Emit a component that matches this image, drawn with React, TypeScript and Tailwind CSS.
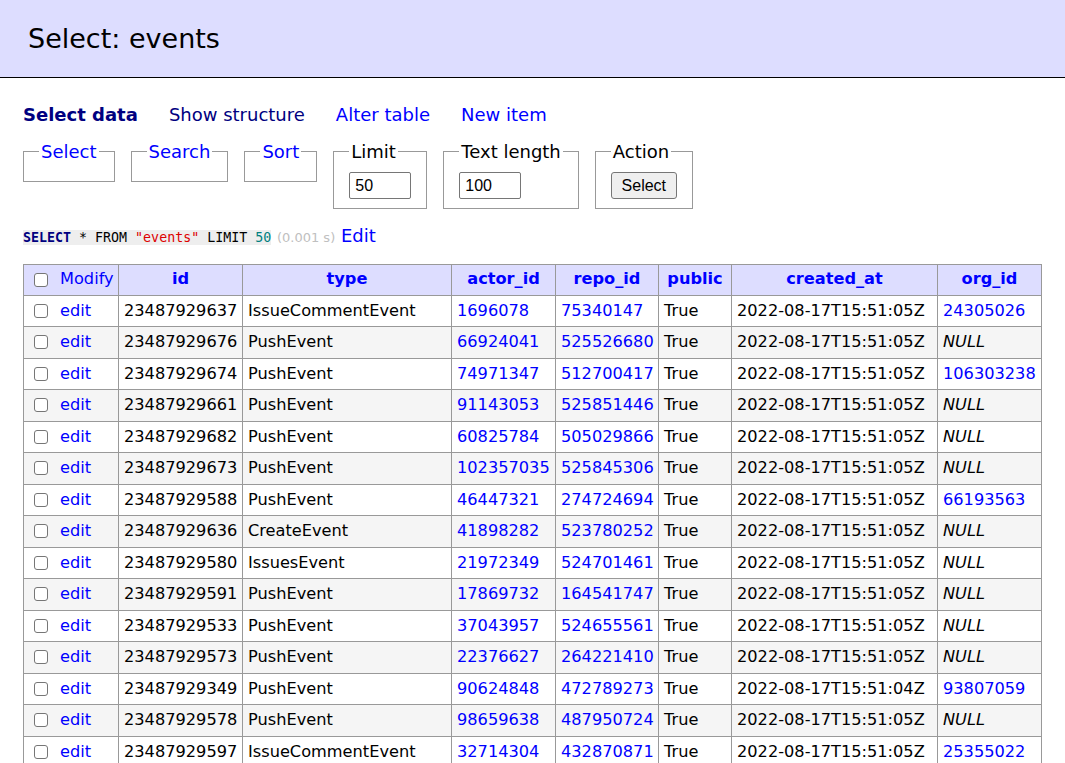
import React from 'react';

type Row = {
  id: string;
  type: string;
  actor: string;
  repo: string;
  created: string;
  org: string | null;
};

const rows: Row[] = [
  { id: '23487929637', type: 'IssueCommentEvent', actor: '1696078', repo: '75340147', created: '2022-08-17T15:51:05Z', org: '24305026' },
  { id: '23487929676', type: 'PushEvent', actor: '66924041', repo: '525526680', created: '2022-08-17T15:51:05Z', org: null },
  { id: '23487929674', type: 'PushEvent', actor: '74971347', repo: '512700417', created: '2022-08-17T15:51:05Z', org: '106303238' },
  { id: '23487929661', type: 'PushEvent', actor: '91143053', repo: '525851446', created: '2022-08-17T15:51:05Z', org: null },
  { id: '23487929682', type: 'PushEvent', actor: '60825784', repo: '505029866', created: '2022-08-17T15:51:05Z', org: null },
  { id: '23487929673', type: 'PushEvent', actor: '102357035', repo: '525845306', created: '2022-08-17T15:51:05Z', org: null },
  { id: '23487929588', type: 'PushEvent', actor: '46447321', repo: '274724694', created: '2022-08-17T15:51:05Z', org: '66193563' },
  { id: '23487929636', type: 'CreateEvent', actor: '41898282', repo: '523780252', created: '2022-08-17T15:51:05Z', org: null },
  { id: '23487929580', type: 'IssuesEvent', actor: '21972349', repo: '524701461', created: '2022-08-17T15:51:05Z', org: null },
  { id: '23487929591', type: 'PushEvent', actor: '17869732', repo: '164541747', created: '2022-08-17T15:51:05Z', org: null },
  { id: '23487929533', type: 'PushEvent', actor: '37043957', repo: '524655561', created: '2022-08-17T15:51:05Z', org: null },
  { id: '23487929573', type: 'PushEvent', actor: '22376627', repo: '264221410', created: '2022-08-17T15:51:05Z', org: null },
  { id: '23487929349', type: 'PushEvent', actor: '90624848', repo: '472789273', created: '2022-08-17T15:51:04Z', org: '93807059' },
  { id: '23487929578', type: 'PushEvent', actor: '98659638', repo: '487950724', created: '2022-08-17T15:51:05Z', org: null },
  { id: '23487929597', type: 'IssueCommentEvent', actor: '32714304', repo: '432870871', created: '2022-08-17T15:51:05Z', org: '25355022' },
];

const Fieldset: React.FC<{ legend: string; link?: boolean; children?: React.ReactNode }> = ({ legend, link, children }) => (
  <fieldset className="border border-[#999] px-[15px] pt-[9px] pb-[9px] min-w-0">
    <legend className={link ? 'px-[2px] text-[#00f]' : 'px-[2px] text-black'}>{legend}</legend>
    {children}
  </fieldset>
);

const Check: React.FC = () => (
  <input
    type="checkbox"
    readOnly
    className="appearance-none block w-[14px] h-[14px] border border-[#767676] rounded-[3px] bg-white ml-[5px] shrink-0"
  />
);

const td = 'border border-[#999] px-[5px] py-0 whitespace-nowrap overflow-hidden';
const th = 'border border-[#999] px-[5px] py-0 whitespace-nowrap font-bold text-[#00f] text-center';

export default function App() {
  return (
    <div className="min-h-screen bg-white text-black font-['DejaVu_Sans',Verdana,sans-serif] text-[18px] leading-[1.25]">
      {/* Title bar */}
      <h2 className="h-[78px] bg-[#ddf] border-b border-black pl-[28px] flex items-center text-[27px] font-normal">
        Select: events
      </h2>

      <div className="pl-[23px]">
        {/* Links */}
        <p className="mt-[26px] flex gap-[31px]">
          <a className="font-bold text-[#000080]">Select data</a>
          <a className="text-[#000080]">Show structure</a>
          <a className="text-[#00f]">Alter table</a>
          <a className="text-[#00f]">New item</a>
        </p>

        {/* Select form */}
        <div className="mt-[14px] flex items-start gap-[16px]">
          <Fieldset legend="Select" link />
          <Fieldset legend="Search" link />
          <Fieldset legend="Sort" link />
          <Fieldset legend="Limit">
            <input
              readOnly
              value="50"
              className="block w-[62px] h-[27px] border border-[#767676] rounded-[2px] px-[5px] text-[16px] font-['Liberation_Sans',Arial,sans-serif] text-black"
            />
          </Fieldset>
          <Fieldset legend="Text length">
            <input
              readOnly
              value="100"
              className="block w-[62px] h-[27px] border border-[#767676] rounded-[2px] px-[5px] text-[16px] font-['Liberation_Sans',Arial,sans-serif] text-black"
            />
          </Fieldset>
          <Fieldset legend="Action">
            <button className="block w-[66px] h-[27px] bg-[#efefef] border border-[#767676] rounded-[3px] text-[16px] font-['Liberation_Sans',Arial,sans-serif] text-black">
              Select
            </button>
          </Fieldset>
        </div>

        {/* Query line */}
        <p className="mt-[16px]">
          <code className="bg-[#eee] font-['DejaVu_Sans_Mono',monospace] text-[13.3px]">
            <span className="font-bold text-[#000080]">SELECT</span> * FROM{' '}
            <span className="text-[#d00]">"events"</span> LIMIT <span className="text-[#007f7f]">50</span>
          </code>{' '}
          <span className="text-[13px] text-[#c0c0c0]">(0.001 s)</span> <a className="text-[#00f]">Edit</a>
        </p>

        {/* Results */}
        <table className="mt-[16px] border-collapse table-fixed w-[1018px] text-[16.2px]">
          <colgroup>
            <col className="w-[95px]" />
            <col className="w-[124px]" />
            <col className="w-[209px]" />
            <col className="w-[104px]" />
            <col className="w-[103px]" />
            <col className="w-[73px]" />
            <col className="w-[206px]" />
            <col className="w-[104px]" />
          </colgroup>
          <thead>
            <tr className="bg-[#ddf] h-[31px]">
              <td className={td}>
                <div className="flex items-center">
                  <Check />
                  <a className="ml-[12px] text-[#00f]">Modify</a>
                </div>
              </td>
              <th className={th}>id</th>
              <th className={th}>type</th>
              <th className={th}>actor_id</th>
              <th className={th}>repo_id</th>
              <th className={th}>public</th>
              <th className={th}>created_at</th>
              <th className={th}>org_id</th>
            </tr>
          </thead>
          <tbody>
            {rows.map((r, i) => (
              <tr key={r.id} className={i % 2 === 1 ? 'bg-[#f5f5f5] h-[31.5px]' : 'bg-white h-[31.5px]'}>
                <td className={td}>
                  <div className="flex items-center">
                    <Check />
                    <a className="ml-[12px] text-[#00f]">edit</a>
                  </div>
                </td>
                <td className={td}>{r.id}</td>
                <td className={td}>{r.type}</td>
                <td className={td}>
                  <a className="text-[#00f]">{r.actor}</a>
                </td>
                <td className={td}>
                  <a className="text-[#00f]">{r.repo}</a>
                </td>
                <td className={td}>True</td>
                <td className={td}>{r.created}</td>
                <td className={td}>
                  {r.org ? <a className="text-[#00f]">{r.org}</a> : <i>NULL</i>}
                </td>
              </tr>
            ))}
          </tbody>
        </table>
      </div>
    </div>
  );
}
